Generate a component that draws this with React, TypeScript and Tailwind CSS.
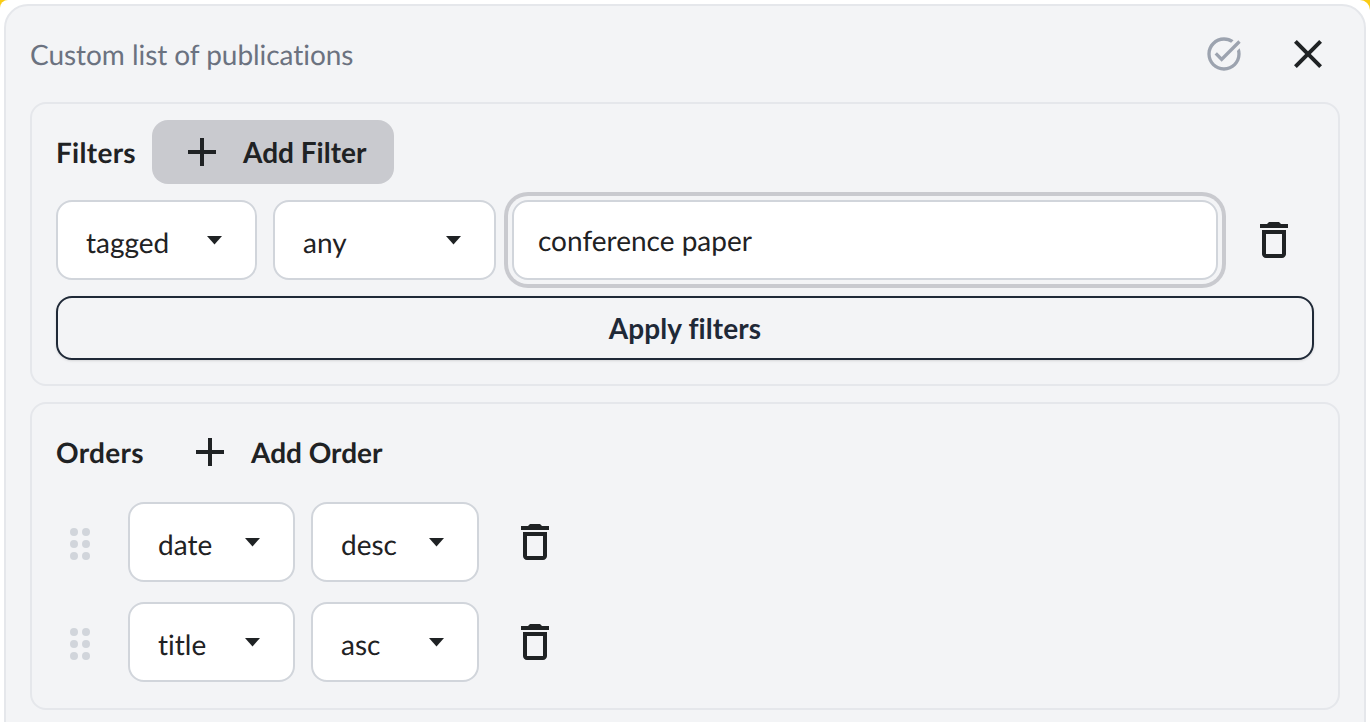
import React from "react";

function Trash() {
  return (
    <svg width="48" height="48" viewBox="0 0 24 24" className="block shrink-0" fill="#1f2224">
      <path d="M6 19c0 1.100.9 2 2 2h8c1.100 0 2-.9 2-2V7H6v12zM8 9h8v10H8V9zm7.500-5l-1-1h-5l-1 1H5v2h14V4h-3.500z" />
    </svg>
  );
}

function AddIcon() {
  return (
    <svg width="48" height="48" viewBox="0 0 24 24" className="block shrink-0" fill="#1f2224">
      <path d="M19 13h-6v6h-2v-6H5v-2h6V5h2v6h6v2z" />
    </svg>
  );
}

function Caret() {
  return (
    <svg width="16" height="10" viewBox="0 0 16 10" className="block shrink-0">
      <path d="M0 1h15L7.500 9.500z" fill="#1f2224" />
    </svg>
  );
}

function Select({ label, width }: { label: string; width: string }) {
  return (
    <div className={`${width} h-20 shrink-0 rounded-2xl border-2 border-[#d1d5db] bg-white pl-[28px] pr-8 flex items-center text-[28px] text-[#1f2224]`}>
      <span className="flex-1 pt-1">{label}</span>
      <Caret />
    </div>
  );
}

function Grip() {
  return (
    <div className="grid grid-cols-2 gap-1 w-5 shrink-0 mt-1">
      {[0, 1, 2, 3, 4, 5].map((i) => (
        <span key={i} className="w-2 h-2 rounded-full bg-[#d1d5db]" />
      ))}
    </div>
  );
}

function OrderRow({ a, b }: { a: string; b: string }) {
  return (
    <div className="flex items-center h-20">
      <div className="ml-3.5 mr-[38px]"><Grip /></div>
      <Select label={a} width="w-[167px]" />
      <div className="w-4 shrink-0" />
      <Select label={b} width="w-[168px]" />
      <div className="ml-8"><Trash /></div>
    </div>
  );
}

export default function App() {
  return (
    <div className="h-[722px] w-full overflow-hidden bg-[#facc15] font-['Lato','Liberation_Sans',sans-serif] [font-variant-ligatures:none] [text-rendering:geometricPrecision] antialiased">
      <div className="h-full bg-white rounded-tl-[8px] rounded-tr-[10px] p-1">
        <div className="h-[760px] rounded-[24px] border-2 border-[#e5e7eb] bg-[#f3f4f6] px-6">
          <div className="flex items-center justify-between h-[96px]">
            <span className="text-[28px] text-[#6b7280] tracking-[-0.05px]">Custom list of publications</span>
            <div className="flex items-center gap-10 mr-2">
              <svg width="40" height="40" viewBox="0 0 24 24" fill="#9ca3af" className="block">
                <path d="M22 5.180L10.590 16.600l-4.240-4.240 1.410-1.410 2.830 2.830 10-10L22 5.180zm-2.210 5.040c.13.570.21 1.170.21 1.780 0 4.420-3.580 8-8 8s-8-3.580-8-8 3.580-8 8-8c1.580 0 3.040.46 4.280 1.220l1.440-1.440C16.100 2.670 14.130 2 12 2 6.480 2 2 6.480 2 12s4.480 10 10 10 10-4.480 10-10c0-1.190-.22-2.330-.6-3.390l-1.610 1.610z" />
              </svg>
              <svg width="48" height="48" viewBox="0 0 24 24" fill="#1f2224" className="block">
                <path d="M19 6.410L17.590 5 12 10.590 6.410 5 5 6.410 10.590 12 5 17.590 6.410 19 12 13.410 17.590 19 19 17.590 13.410 12z" />
              </svg>
            </div>
          </div>

          <div className="rounded-2xl border-2 border-[#e5e7eb] px-6 pt-4 pb-6">
            <div className="flex items-center gap-4 h-16">
              <span className="w-20 text-[28px] font-bold text-[#1f2224] tracking-[0.3px]">Filters</span>
              <button className="h-16 w-[242px] rounded-2xl bg-[#c9cacf] flex items-center pl-[26px] gap-[17px] text-[28px] font-bold text-[#1f2224]">
                <AddIcon />
                Add Filter
              </button>
            </div>
            <div className="flex items-center mt-4 h-20">
              <Select label="tagged" width="w-[201px]" />
              <div className="w-4 shrink-0" />
              <Select label="any" width="w-[223px]" />
              <div className="w-4 shrink-0" />
              <div className="w-[706px] h-20 shrink-0 rounded-2xl border-2 border-[#d1d5db] bg-white flex items-center pl-6 text-[28px] text-[#1f2224] shadow-[0_0_0_4px_#f3f4f6,0_0_0_8px_#c9cacf]">conference paper</div>
              <div className="ml-8"><Trash /></div>
            </div>
            <button className="mt-4 w-full h-16 rounded-2xl border-2 border-[#1f2937] text-[28px] font-bold text-[#1f2937] tracking-[0.1px] shadow-sm">Apply filters</button>
          </div>

          <div className="mt-4 rounded-2xl border-2 border-[#e5e7eb] px-6 pt-4 pb-[26px]">
            <div className="flex items-center h-16 mb-[18px]">
              <span className="w-[88px] text-[28px] font-bold text-[#1f2224] tracking-[0.3px]">Orders</span>
              <div className="ml-[42px]"><AddIcon /></div>
              <span className="ml-[17px] text-[28px] font-bold text-[#1f2224]">Add Order</span>
            </div>
            <div className="flex flex-col gap-5">
              <OrderRow a="date" b="desc" />
              <OrderRow a="title" b="asc" />
            </div>
          </div>
        </div>
      </div>
    </div>
  );
}
